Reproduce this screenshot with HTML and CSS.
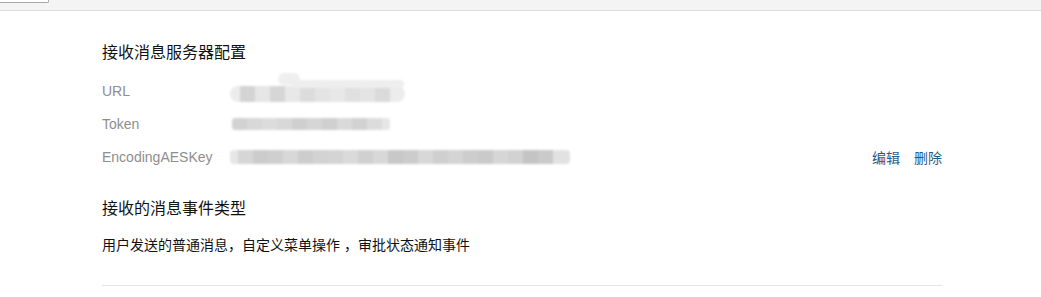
FILE: index.html
```html
<!DOCTYPE html>
<html lang="zh-CN">
<head>
<meta charset="utf-8">
<title>接收消息服务器配置</title>
<link rel="stylesheet" href="styles.css">
</head>
<body>
<div class="topbar"><span class="tab"></span></div>
<main class="content">
  <h2 class="title">接收消息服务器配置</h2>
  <div class="rows">
    <div class="row">
      <span class="label">URL</span>
      <span class="value"><span class="mask mask-url"></span></span>
    </div>
    <div class="row">
      <span class="label">Token</span>
      <span class="value"><span class="mask mask-token"></span></span>
    </div>
    <div class="row">
      <span class="label">EncodingAESKey</span>
      <span class="value"><span class="mask mask-key"></span></span>
      <span class="actions"><a class="link">编辑</a><a class="link">删除</a></span>
    </div>
  </div>
  <h2 class="title title-2">接收的消息事件类型</h2>
  <p class="desc">用户发送的普通消息，自定义菜单操作 ，审批状态通知事件</p>
  <div class="divider"></div>
</main>
</body>
</html>
```

FILE: styles.css
```css
html, body {
  margin: 0;
  padding: 0;
  background: #fff;
  font-family: "Liberation Sans", "Noto Sans CJK SC", sans-serif;
  color: #222;
}

.topbar {
  height: 10px;
  background: #f4f4f4;
  border-bottom: 1px solid #dcdcdc;
}

.tab {
  display: block;
  width: 48px;
  height: 2px;
  border: 1px solid #a8a8a8;
  border-top: none;
  border-left: none;
  border-bottom-right-radius: 2px;
  background: #fff;
}

.content {
  width: 840px;
  margin-left: 102px;
  padding-top: 32px;
}

.title {
  margin: 0;
  font-size: 16px;
  font-weight: normal;
  line-height: 20px;
  color: #111;
}

.rows {
  margin-top: 11px;
}

.row {
  display: flex;
  align-items: center;
  height: 33px;
}

.label {
  width: 128px;
  flex: none;
  font-size: 14px;
  color: #8e8e8e;
}

.value {
  flex: 1;
  display: flex;
  align-items: center;
  height: 33px;
}

.mask {
  display: block;
  filter: blur(1px);
  border-radius: 8px;
  position: relative;
}

.mask-url {
  width: 175px;
  height: 16px;
  margin-top: 6px;
  background: linear-gradient(to right,
    #ececec 0 10px, #d4d4d4 10px 25px, #e6e6e6 25px 40px, #d6d6d6 40px 55px,
    #e8e8e8 55px 70px, #dcdcdc 70px 85px, #e4e4e4 85px 100px, #e8e8e8 100px 115px,
    #e0e0e0 115px 130px, #e4e4e4 130px 145px, #dadada 145px 160px, #ececec 160px 175px);
}

.mask-url::before {
  content: "";
  position: absolute;
  left: 48px;
  top: -13px;
  width: 22px;
  height: 12px;
  border-radius: 6px;
  background: #efefef;
}

.mask-url::after {
  content: "";
  position: absolute;
  left: 62px;
  top: -6px;
  width: 112px;
  height: 8px;
  border-radius: 4px;
  background: #eeeeee;
}

.mask-token {
  width: 158px;
  height: 12px;
  margin-left: 2px;
  border-radius: 3px;
  background: linear-gradient(to right,
    #d2d2d2 0 15px, #d8d8d8 15px 30px, #dcdcdc 30px 45px, #d8d8d8 45px 60px,
    #cfcfcf 60px 75px, #d6d6d6 75px 90px, #cfcfcf 90px 105px, #dadada 105px 120px,
    #d2d2d2 120px 135px, #dcdcdc 135px 150px, #e6e6e6 150px 158px);
}

.mask-key {
  width: 340px;
  height: 14px;
  border-radius: 4px;
  background: linear-gradient(to right,
    #e6e6e6 0 8px, #d6d6d6 8px 23px, #cccccc 23px 38px, #cfcfcf 38px 53px,
    #d8d8d8 53px 68px, #cdcdcd 68px 83px, #d2d2d2 83px 98px, #d4d4d4 98px 113px,
    #dadada 113px 128px, #d0d0d0 128px 143px, #d8d8d8 143px 158px, #c8c8c8 158px 173px,
    #cccccc 173px 188px, #d8d8d8 188px 203px, #cfcfcf 203px 218px, #d4d4d4 218px 233px,
    #cdcdcd 233px 248px, #cacaca 248px 263px, #d6d6d6 263px 278px, #d2d2d2 278px 293px,
    #c4c4c4 293px 308px, #cacaca 308px 323px, #e2e2e2 323px 340px);
}

.actions {
  display: flex;
  gap: 14px;
  flex: none;
}

.link {
  font-size: 14px;
  color: #1f5a8c;
  cursor: pointer;
}

.title-2 {
  margin-top: 26px;
}

.desc {
  margin: 16px 0 0;
  font-size: 14px;
  line-height: 20px;
  color: #111;
}

.divider {
  margin-top: 30px;
  height: 1px;
  background: #e4e4e4;
}
```
